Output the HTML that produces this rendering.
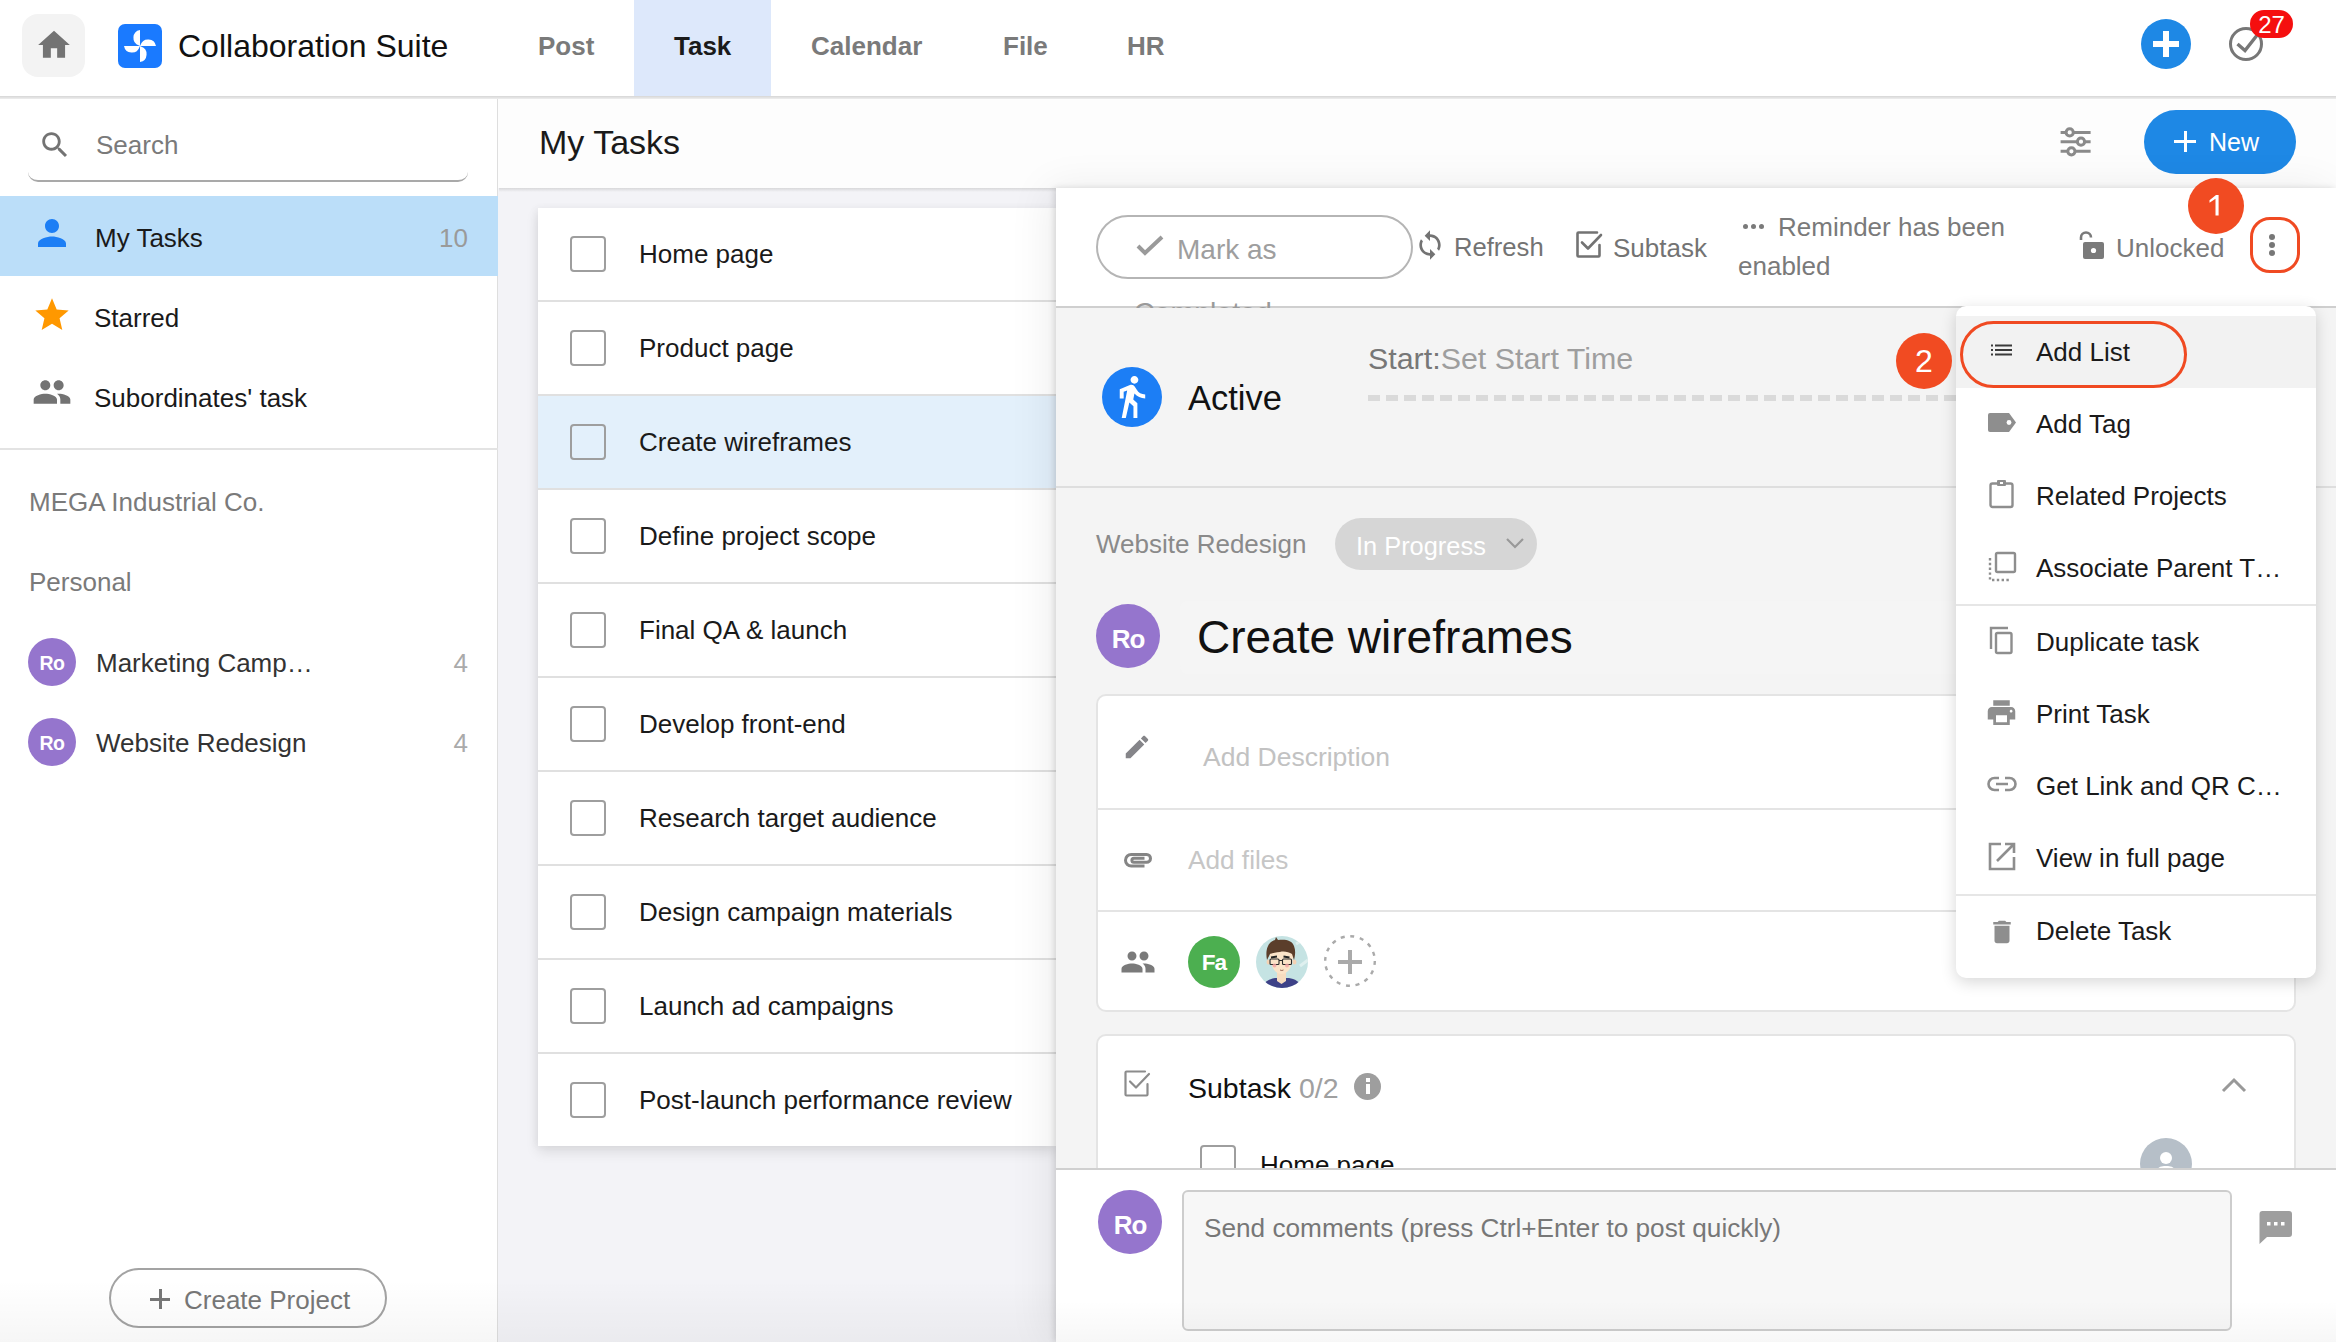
<!DOCTYPE html>
<html><head><meta charset="utf-8">
<style>
*{box-sizing:border-box;margin:0;padding:0}
html,body{width:2336px;height:1342px;overflow:hidden;background:#fff}
body{position:relative;font-family:"Liberation Sans",sans-serif;color:#1f1f1f}
.a{position:absolute}
.t{position:absolute;line-height:1;white-space:nowrap;font-size:26px}
svg{position:absolute;display:block}
</style></head><body>

<!-- ================= TOP BAR ================= -->
<div class="a" id="topbar" style="left:0;top:0;width:2336px;height:96px;background:#fff"></div>
<div class="a" style="left:0;top:96px;width:2336px;height:3px;background:linear-gradient(to bottom,#d6d6d6,#eeeeee)"></div>
<div class="a" style="left:22px;top:14px;width:63px;height:63px;border-radius:16px;background:#f3f3f3"></div>
<svg style="left:35px;top:26px" width="38" height="38" viewBox="0 0 24 24"><path fill="#737373" d="M10 20v-6h4v6h5v-8h3L12 3 2 12h3v8z"/></svg>
<div class="a" style="left:118px;top:24px;width:44px;height:44px;border-radius:7px;background:#1a7aff"></div>
<svg style="left:118px;top:24px" width="44" height="44" viewBox="0 0 44 44"><g fill="#fff"><path d="M22 22V6A8 8 0 0 0 21 21.5Z"/><path d="M22 22H38A8 8 0 0 0 22.5 21Z"/><path d="M22 22V38A8 8 0 0 0 23 22.5Z"/><path d="M22 22H6A8 8 0 0 0 21.5 23Z"/></g></svg>
<div class="t" style="left:178px;top:30px;font-size:32px;color:#111">Collaboration Suite</div>

<div class="a" style="left:634px;top:0;width:137px;height:96px;background:#dde8fb"></div>
<div class="t" style="left:538px;top:33px;font-weight:bold;color:#7a7a7a">Post</div>
<div class="t" style="left:674px;top:33px;font-weight:bold;color:#1a1a1a">Task</div>
<div class="t" style="left:811px;top:33px;font-weight:bold;color:#7a7a7a">Calendar</div>
<div class="t" style="left:1003px;top:33px;font-weight:bold;color:#7a7a7a">File</div>
<div class="t" style="left:1127px;top:33px;font-weight:bold;color:#7a7a7a">HR</div>

<div class="a" style="left:2141px;top:19px;width:50px;height:50px;border-radius:50%;background:#1e88e5"></div>
<div class="a" style="left:2153px;top:41px;width:26px;height:6px;background:#fff"></div>
<div class="a" style="left:2163px;top:31px;width:6px;height:26px;background:#fff"></div>
<svg style="left:2228px;top:26px" width="36" height="36" viewBox="0 0 36 36"><circle cx="18" cy="18" r="15.5" fill="none" stroke="#777" stroke-width="3"/><path d="M9.5 18l7.5 6.5L30 8" fill="none" stroke="#777" stroke-width="3.4"/></svg>
<div class="a" style="left:2250px;top:10px;width:43px;height:28px;border-radius:14px;background:#f50f0f"></div>
<div class="t" style="left:2250px;top:13px;width:43px;text-align:center;font-size:24px;color:#fff">27</div>

<!-- ================= SIDEBAR ================= -->
<div class="a" id="sidebar" style="left:0;top:99px;width:498px;height:1243px;background:#fff;border-right:1px solid #dedede"></div>
<svg style="left:38px;top:128px" width="34" height="34" viewBox="0 0 24 24"><path fill="#737373" d="M15.5 14h-.79l-.28-.27C15.41 12.59 16 11.11 16 9.5 16 5.91 13.09 3 9.5 3S3 5.91 3 9.5 5.91 16 9.5 16c1.61 0 3.09-.59 4.23-1.57l.27.28v.79l5 4.99L20.49 19l-4.99-5zm-6 0C7.01 14 5 11.99 5 9.5S7.01 5 9.5 5 14 7.01 14 9.5 11.99 14 9.5 14z"/></svg>
<div class="t" style="left:96px;top:132px;color:#7a7a7a">Search</div>
<div class="a" style="left:28px;top:160px;width:440px;height:22px;border-bottom:2px solid #a9a9a9;border-radius:0 0 10px 10px"></div>

<div class="a" style="left:0;top:196px;width:498px;height:80px;background:#bbdef9"></div>
<svg style="left:31px;top:212px" width="42" height="42" viewBox="0 0 24 24"><path fill="#1c7ef5" d="M12 12c2.21 0 4-1.79 4-4s-1.79-4-4-4-4 1.79-4 4 1.79 4 4 4zm0 2c-2.67 0-8 1.34-8 4v2h16v-2c0-2.66-5.33-4-8-4z"/></svg>
<div class="t" style="left:95px;top:225px;color:#1a1a1a">My Tasks</div>
<div class="t" style="left:400px;top:225px;width:68px;text-align:right;color:#9a9a9a">10</div>

<svg style="left:32px;top:295px" width="40" height="40" viewBox="0 0 24 24"><path fill="#ff9800" d="M12 17.27L18.18 21l-1.64-7.03L22 9.24l-7.19-.61L12 2 9.19 8.63 2 9.24l5.46 4.73L5.82 21z"/></svg>
<div class="t" style="left:94px;top:305px;color:#1a1a1a">Starred</div>
<svg style="left:32px;top:372px" width="40" height="40" viewBox="0 0 24 24"><path fill="#737373" d="M16 11c1.66 0 2.99-1.34 2.99-3S17.66 5 16 5c-1.66 0-3 1.34-3 3s1.34 3 3 3zm-8 0c1.66 0 2.99-1.34 2.99-3S9.66 5 8 5C6.34 5 5 6.34 5 8s1.34 3 3 3zm0 2c-2.33 0-7 1.17-7 3.5V19h14v-2.5c0-2.330-4.670-3.5-7-3.5zm8 0c-.29 0-.62.02-.97.05 1.16.84 1.97 1.970 1.97 3.45V19h6v-2.5c0-2.33-4.67-3.5-7-3.5z"/></svg>
<div class="t" style="left:94px;top:385px;color:#1a1a1a">Subordinates' task</div>
<div class="a" style="left:0;top:448px;width:498px;height:2px;background:#e3e3e3"></div>

<div class="t" style="left:29px;top:489px;color:#7a7a7a">MEGA Industrial Co.</div>
<div class="t" style="left:29px;top:569px;color:#7a7a7a">Personal</div>

<div class="a" style="left:28px;top:638px;width:48px;height:48px;border-radius:50%;background:#9575cd"></div>
<div class="t" style="left:28px;top:654px;width:48px;text-align:center;font-size:19.5px;font-weight:bold;letter-spacing:-0.6px;color:#fff">Ro</div>
<div class="t" style="left:96px;top:650px;color:#333">Marketing Camp…</div>
<div class="t" style="left:400px;top:650px;width:68px;text-align:right;color:#aaa">4</div>
<div class="a" style="left:28px;top:718px;width:48px;height:48px;border-radius:50%;background:#9575cd"></div>
<div class="t" style="left:28px;top:734px;width:48px;text-align:center;font-size:19.5px;font-weight:bold;letter-spacing:-0.6px;color:#fff">Ro</div>
<div class="t" style="left:96px;top:730px;color:#333">Website Redesign</div>
<div class="t" style="left:400px;top:730px;width:68px;text-align:right;color:#aaa">4</div>

<div class="a" style="left:109px;top:1268px;width:278px;height:60px;border-radius:30px;border:2px solid #a3a3a3"></div>
<div class="a" style="left:150px;top:1297.5px;width:20px;height:3px;background:#777"></div>
<div class="a" style="left:158.5px;top:1289px;width:3px;height:20px;background:#777"></div>
<div class="t" style="left:184px;top:1287px;color:#777">Create Project</div>

<!-- ================= MAIN HEADER ================= -->
<div class="a" id="header" style="left:498px;top:99px;width:1838px;height:89px;background:#fdfdfd"></div>
<div class="t" style="left:539px;top:125px;font-size:34px;color:#1a1a1a">My Tasks</div>
<svg style="left:2058px;top:126px" width="36" height="32" viewBox="0 0 36 32"><g fill="none" stroke="#8a8a8a" stroke-width="3"><path d="M2.600 6.400h5.500M15.300 6.400h17.300M2.600 15.700h16.800M26.600 15.700h6M2.600 25.300h7.200M17 25.300h15.600"/><circle cx="11.700" cy="6.400" r="3.600"/><circle cx="23" cy="15.700" r="3.600"/><circle cx="13.400" cy="25.300" r="3.600"/></g></svg>
<div class="a" style="left:2144px;top:110px;width:152px;height:64px;border-radius:32px;background:#1e88e5"></div>
<div class="a" style="left:2174px;top:140px;width:22px;height:3px;background:#fff"></div>
<div class="a" style="left:2183.5px;top:131px;width:3px;height:21px;background:#fff"></div>
<div class="t" style="left:2209px;top:130px;font-size:25px;color:#fff">New</div>

<!-- ================= LIST ================= -->
<div class="a" id="listbg" style="left:498px;top:188px;width:558px;height:1154px;background:#f3f3f7"></div>
<div class="a" style="left:499px;top:188px;width:557px;height:4px;background:linear-gradient(to bottom,#d8d8da,rgba(243,243,246,0))"></div>
<div class="a" id="list" style="left:538px;top:208px;width:518px;height:938px;background:#fff;box-shadow:0 6px 12px rgba(0,0,0,0.10),-3px 0 8px rgba(0,0,0,0.04)"></div>
<div class="a" style="left:538px;top:208px;width:518px;height:94px;background:#fff;border-bottom:2px solid #e0e0e0;"></div>
<div class="a" style="left:570px;top:236px;width:36px;height:36px;border:2px solid #9e9e9e;border-radius:4px"></div>
<div class="t" style="left:639px;top:241px;color:#1a1a1a">Home page</div>
<div class="a" style="left:538px;top:302px;width:518px;height:94px;background:#fff;border-bottom:2px solid #e0e0e0;"></div>
<div class="a" style="left:570px;top:330px;width:36px;height:36px;border:2px solid #9e9e9e;border-radius:4px"></div>
<div class="t" style="left:639px;top:335px;color:#1a1a1a">Product page</div>
<div class="a" style="left:538px;top:396px;width:518px;height:94px;background:#e3f0fb;border-bottom:2px solid #e0e0e0;"></div>
<div class="a" style="left:570px;top:424px;width:36px;height:36px;border:2px solid #9e9e9e;border-radius:4px"></div>
<div class="t" style="left:639px;top:429px;color:#1a1a1a">Create wireframes</div>
<div class="a" style="left:538px;top:490px;width:518px;height:94px;background:#fff;border-bottom:2px solid #e0e0e0;"></div>
<div class="a" style="left:570px;top:518px;width:36px;height:36px;border:2px solid #9e9e9e;border-radius:4px"></div>
<div class="t" style="left:639px;top:523px;color:#1a1a1a">Define project scope</div>
<div class="a" style="left:538px;top:584px;width:518px;height:94px;background:#fff;border-bottom:2px solid #e0e0e0;"></div>
<div class="a" style="left:570px;top:612px;width:36px;height:36px;border:2px solid #9e9e9e;border-radius:4px"></div>
<div class="t" style="left:639px;top:617px;color:#1a1a1a">Final QA &amp; launch</div>
<div class="a" style="left:538px;top:678px;width:518px;height:94px;background:#fff;border-bottom:2px solid #e0e0e0;"></div>
<div class="a" style="left:570px;top:706px;width:36px;height:36px;border:2px solid #9e9e9e;border-radius:4px"></div>
<div class="t" style="left:639px;top:711px;color:#1a1a1a">Develop front-end</div>
<div class="a" style="left:538px;top:772px;width:518px;height:94px;background:#fff;border-bottom:2px solid #e0e0e0;"></div>
<div class="a" style="left:570px;top:800px;width:36px;height:36px;border:2px solid #9e9e9e;border-radius:4px"></div>
<div class="t" style="left:639px;top:805px;color:#1a1a1a">Research target audience</div>
<div class="a" style="left:538px;top:866px;width:518px;height:94px;background:#fff;border-bottom:2px solid #e0e0e0;"></div>
<div class="a" style="left:570px;top:894px;width:36px;height:36px;border:2px solid #9e9e9e;border-radius:4px"></div>
<div class="t" style="left:639px;top:899px;color:#1a1a1a">Design campaign materials</div>
<div class="a" style="left:538px;top:960px;width:518px;height:94px;background:#fff;border-bottom:2px solid #e0e0e0;"></div>
<div class="a" style="left:570px;top:988px;width:36px;height:36px;border:2px solid #9e9e9e;border-radius:4px"></div>
<div class="t" style="left:639px;top:993px;color:#1a1a1a">Launch ad campaigns</div>
<div class="a" style="left:538px;top:1054px;width:518px;height:92px;background:#fff;"></div>
<div class="a" style="left:570px;top:1082px;width:36px;height:36px;border:2px solid #9e9e9e;border-radius:4px"></div>
<div class="t" style="left:639px;top:1087px;color:#1a1a1a">Post-launch performance review</div>


<div class="a" style="left:0;top:1280px;width:1056px;height:62px;background:linear-gradient(to bottom,rgba(0,0,0,0),rgba(0,0,0,0.035))"></div>
<!-- ================= DETAIL PANEL ================= -->
<div class="a" id="panel" style="left:1056px;top:188px;width:1280px;height:1154px;background:#f4f4f4;box-shadow:-2px 0 6px rgba(0,0,0,0.13),-8px 0 40px rgba(0,0,0,0.07)"></div>
<div class="a" style="left:1056px;top:188px;width:1280px;height:120px;background:#fff;border-bottom:2px solid #cfcfcf"></div>
<!-- Completed peeking text -->
<div class="a" style="left:1056px;top:296px;width:900px;height:11.5px;overflow:hidden"><div class="t" style="left:78px;top:1.5px;font-size:28.5px;color:#9a9a9a">Completed</div></div>
<div class="a" style="left:1096px;top:215px;width:317px;height:64px;border-radius:32px;border:2px solid #b5b5b5"></div>
<svg style="left:1136px;top:235px" width="28" height="22" viewBox="0 0 28 22"><path d="M2 11l7 7L26 2" fill="none" stroke="#9a9a9a" stroke-width="4"/></svg>
<div class="t" style="left:1177px;top:236px;font-size:28px;color:#9e9e9e">Mark as</div>
<svg style="left:1414px;top:228px" width="32" height="34" viewBox="0 0 24 24"><path fill="#737373" d="M12 4V1L8 5l4 4V6c3.310 0 6 2.690 6 6 0 1.010-.25 1.970-.7 2.800l1.460 1.460C19.540 15.030 20 13.570 20 12c0-4.420-3.580-8-8-8zm0 14c-3.310 0-6-2.690-6-6 0-1.010.25-1.970.7-2.800L5.240 7.740C4.460 8.970 4 10.430 4 12c0 4.420 3.580 8 8 8v3l4-4-4-4v3z"/></svg>
<div class="t" style="left:1454px;top:235px;font-size:25.6px;color:#737373">Refresh</div>
<svg style="left:1574px;top:229px" width="32" height="32" viewBox="0 0 32 32"><path d="M23 3.500H4.500a1 1 0 0 0-1 1V26.500a1 1 0 0 0 1 1h20a1 1 0 0 0 1-1V16" fill="none" stroke="#737373" stroke-width="2.600" stroke-linecap="round" stroke-linejoin="round"/><path d="M8 13.500l6 6L27 6" fill="none" stroke="#737373" stroke-width="2.600" stroke-linecap="round" stroke-linejoin="round"/></svg>
<div class="t" style="left:1613px;top:235px;color:#737373">Subtask</div>
<div class="a" style="left:1743px;top:224px;width:5px;height:5px;border-radius:50%;background:#7a7a7a"></div>
<div class="a" style="left:1751px;top:224px;width:5px;height:5px;border-radius:50%;background:#7a7a7a"></div>
<div class="a" style="left:1759px;top:224px;width:5px;height:5px;border-radius:50%;background:#7a7a7a"></div>
<div class="t" style="left:1778px;top:214px;color:#7a7a7a">Reminder has been</div>
<div class="t" style="left:1738px;top:253px;color:#7a7a7a">enabled</div>
<svg style="left:2076px;top:229px" width="30" height="32" viewBox="0 0 30 32"><path d="M5 11V8.5a5 5 0 0 1 10 0" fill="none" stroke="#7a7a7a" stroke-width="2.6"/><rect x="7" y="13" width="21" height="17" rx="2" fill="#7a7a7a"/><circle cx="17.5" cy="21.5" r="2.6" fill="#fff"/></svg>
<div class="t" style="left:2116px;top:235px;color:#7a7a7a">Unlocked</div>
<!-- kebab -->
<div class="a" style="left:2269px;top:234px;width:6px;height:6px;border-radius:50%;background:#777"></div>
<div class="a" style="left:2269px;top:242px;width:6px;height:6px;border-radius:50%;background:#777"></div>
<div class="a" style="left:2269px;top:250px;width:6px;height:6px;border-radius:50%;background:#777"></div>
<div class="a" style="left:2250px;top:217px;width:50px;height:56px;border-radius:20px;border:3px solid #f04a22"></div>
<div class="a" style="left:2188px;top:178px;width:56px;height:56px;border-radius:50%;background:#f14b22"></div>
<svg style="left:2188px;top:178px" width="56" height="56" viewBox="0 0 56 56"><path d="M30.600 17H28L21.500 22.200v2.600L27.500 20.800V37.400h3.100z" fill="#fff"/></svg>

<!-- Active section -->
<div class="a" style="left:1056px;top:486px;width:1280px;height:2px;background:#dedede"></div>
<div class="a" style="left:1102px;top:367px;width:60px;height:60px;border-radius:50%;background:#1c7ef5"></div>
<svg style="left:1108px;top:373px" width="47" height="47" viewBox="0 0 24 24"><path fill="#fff" d="M13.500 5.500c1.100 0 2-.9 2-2s-.9-2-2-2-2 .9-2 2 .9 2 2 2zM9.800 8.900L7 23h2.100l1.800-8 2.100 2v6h2v-7.500l-2.100-2 .6-3C14.800 12 16.800 13 19 13v-2c-1.900 0-3.500-1-4.300-2.400l-1-1.600c-.4-.6-1-1-1.700-1-.3 0-.5.1-.8.1L6 8.300V13h2V9.600l1.800-.7"/></svg>
<div class="t" style="left:1188px;top:381px;font-size:34.5px;color:#111">Active</div>
<div class="t" style="left:1368px;top:343px;font-size:30.4px;color:#777">Start:<span style="color:#9e9e9e">Set Start Time</span></div>
<div class="a" style="left:1368px;top:395px;width:600px;height:6px;background:repeating-linear-gradient(90deg,#dadada 0 12px,transparent 12px 18px)"></div>

<!-- project / status -->
<div class="t" style="left:1096px;top:531px;color:#8a8a8a">Website Redesign</div>
<div class="a" style="left:1335px;top:518px;width:202px;height:52px;border-radius:26px;background:#d6d6d6"></div>
<div class="t" style="left:1356px;top:534px;font-size:25.4px;color:#fff">In Progress</div>
<svg style="left:1505px;top:536px" width="20" height="14" viewBox="0 0 20 14"><path d="M2 3l8 8 8-8" fill="none" stroke="#999" stroke-width="2.2"/></svg>

<!-- title -->
<div class="a" style="left:1096px;top:604px;width:64px;height:64px;border-radius:50%;background:#9575cd"></div>
<div class="t" style="left:1096px;top:626px;width:64px;text-align:center;font-size:26px;font-weight:bold;letter-spacing:-1px;color:#fff">Ro</div>
<div class="a" style="left:1180px;top:601px;width:1116px;height:73px;border-radius:8px;background:#f5f5f5"></div>
<div class="t" style="left:1197px;top:614px;font-size:46px;color:#111">Create wireframes</div>

<!-- info card -->
<div class="a" style="left:1096px;top:694px;width:1200px;height:318px;border-radius:10px;background:#fff;border:2px solid #e4e4e4"></div>
<div class="a" style="left:1098px;top:808px;width:1196px;height:2px;background:#e4e4e4"></div>
<div class="a" style="left:1098px;top:910px;width:1196px;height:2px;background:#e4e4e4"></div>
<svg style="left:1122px;top:732px" width="30" height="30" viewBox="0 0 24 24"><path fill="#858589" d="M3 17.250V21h3.750L17.810 9.940l-3.750-3.750L3 17.250zM20.710 7.040c.39-.39.39-1.020 0-1.410l-2.340-2.340c-.39-.39-1.020-.39-1.410 0l-1.830 1.830 3.750 3.750 1.830-1.830z"/></svg>
<div class="t" style="left:1203px;top:744px;font-size:26.5px;color:#c2c2c2">Add Description</div>
<svg style="left:1122px;top:849px" width="32" height="22" viewBox="0 0 32 22"><path d="M22.5 17H9.25A5.75 5.75 0 0 1 9.25 5.5H24.6A3.9 3.9 0 0 1 24.6 13.3H11.9A2 2 0 0 1 11.9 9.3H22.5" fill="none" stroke="#858585" stroke-width="3"/></svg>
<div class="t" style="left:1188px;top:847px;font-size:26.2px;color:#c6c6c6">Add files</div>
<svg style="left:1120px;top:944px" width="36" height="36" viewBox="0 0 24 24"><path fill="#7a7a7a" d="M16 11c1.660 0 2.990-1.340 2.990-3S17.660 5 16 5c-1.660 0-3 1.340-3 3s1.340 3 3 3zm-8 0c1.660 0 2.990-1.340 2.990-3S9.660 5 8 5C6.340 5 5 6.340 5 8s1.340 3 3 3zm0 2c-2.330 0-7 1.170-7 3.500V19h14v-2.500c0-2.330-4.670-3.500-7-3.500zm8 0c-.29 0-.62.02-.97.05 1.160.84 1.970 1.970 1.970 3.450V19h6v-2.500c0-2.330-4.670-3.500-7-3.500z"/></svg>
<div class="a" style="left:1188px;top:936px;width:52px;height:52px;border-radius:50%;background:#4caf50"></div>
<div class="t" style="left:1188px;top:952px;width:52px;text-align:center;font-size:22.6px;font-weight:bold;letter-spacing:-1px;color:#fff">Fa</div>
<svg style="left:1256px;top:936px" width="52" height="52" viewBox="0 0 52 52"><defs><clipPath id="cav"><circle cx="26" cy="26" r="26"/></clipPath></defs><g clip-path="url(#cav)"><rect width="52" height="52" fill="#c5e3e3"/><path d="M40 8L50 2M44 30L52 24" stroke="#dff0ef" stroke-width="3"/><path d="M4 54c3-8 9-11 15-12h14c6 1 12 4 15 12z" fill="#3d4187"/><path d="M21 36h9v9l-4.500 3-4.500-3z" fill="#f7dcc0"/><path d="M13.500 14c0 16 5 24 12 24s12-8 12-24z" fill="#fbe3c8"/><ellipse cx="12.500" cy="26" rx="2" ry="2.500" fill="#f4d2b4"/><ellipse cx="38.500" cy="26" rx="2" ry="2.500" fill="#f4d2b4"/><path d="M11 24C9 14 12 6 19 4l1-3 2 3c7-1 14 0 16 6 2 5 1 10 0 14l-2-6c-3-2-8-3-12-2-4 0-7 1-10 2z" fill="#5b3e2b"/><path d="M15 21.500l6-1M27.500 20.500l6 1" stroke="#222" stroke-width="1.800"/><g fill="none" stroke="#2a2a2a" stroke-width="1.100"><rect x="14" y="23" width="9" height="5.500" rx="1"/><rect x="26.500" y="23" width="9" height="5.500" rx="1"/><path d="M23 24.500h3.500"/></g><circle cx="18.500" cy="29.500" r="2" fill="#f3a3a3" opacity=".8"/><circle cx="31" cy="29.500" r="2" fill="#f3a3a3" opacity=".8"/><path d="M24 34q2 1 3.500 0" fill="none" stroke="#9a6a5a" stroke-width="1"/></g></svg>
<svg style="left:1323px;top:934px" width="54" height="54" viewBox="0 0 54 54"><circle cx="27" cy="27" r="24.800" fill="none" stroke="#aaa" stroke-width="2.400" stroke-dasharray="4 5.700"/><path d="M15 28h24M27 16v24" stroke="#aaa" stroke-width="4"/></svg>

<!-- subtask card -->
<div class="a" style="left:1096px;top:1034px;width:1200px;height:200px;border-radius:10px;background:#fff;border:2px solid #e4e4e4"></div>
<svg style="left:1122px;top:1068px" width="32" height="32" viewBox="0 0 32 32"><path d="M23 3.500H4.500a1 1 0 0 0-1 1V26.500a1 1 0 0 0 1 1h20a1 1 0 0 0 1-1V16" fill="none" stroke="#8c8c8c" stroke-width="2.200" stroke-linecap="round" stroke-linejoin="round"/><path d="M8 13.500l6 6L27 6" fill="none" stroke="#8c8c8c" stroke-width="2.200" stroke-linecap="round" stroke-linejoin="round"/></svg>
<div class="t" style="left:1188px;top:1074px;font-size:28.5px;color:#111">Subtask <span style="color:#a0a0a0">0/2</span></div>
<div class="a" style="left:1354px;top:1073px;width:27px;height:27px;border-radius:50%;background:#9e9e9e"></div>
<div class="a" style="left:1366px;top:1084px;width:3.500px;height:10px;background:#fff"></div>
<div class="a" style="left:1366px;top:1078px;width:3.500px;height:3.500px;background:#fff"></div>
<svg style="left:2220px;top:1076px" width="28" height="20" viewBox="0 0 28 20"><path d="M3 15l11-11 11 11" fill="none" stroke="#999" stroke-width="3"/></svg>
<div class="a" style="left:1200px;top:1145px;width:36px;height:36px;border:2px solid #9e9e9e;border-radius:4px"></div>
<div class="t" style="left:1260px;top:1152px;color:#111">Home page</div>
<div class="a" style="left:2140px;top:1138px;width:52px;height:52px;border-radius:50%;background:#b6bfc8"></div>
<div class="a" style="left:2160px;top:1152px;width:12px;height:12px;border-radius:50%;background:#fff"></div><div class="a" style="left:2154px;top:1166px;width:24px;height:10px;border-radius:12px 12px 0 0;background:#fff"></div>

<!-- comment area -->
<div class="a" style="left:1056px;top:1168px;width:1280px;height:174px;background:#fff;border-top:2px solid #d0d0d0"></div>
<div class="a" style="left:1098px;top:1190px;width:64px;height:64px;border-radius:50%;background:#9575cd"></div>
<div class="t" style="left:1098px;top:1212px;width:64px;text-align:center;font-size:26px;font-weight:bold;letter-spacing:-1px;color:#fff">Ro</div>
<div class="a" style="left:1182px;top:1190px;width:1050px;height:141px;border-radius:6px;background:#f7f7f7;border:2px solid #cdcdcd"></div>
<div class="t" style="left:1204px;top:1215px;font-size:26.2px;color:#777">Send comments (press Ctrl+Enter to post quickly)</div>
<svg style="left:2258px;top:1210px" width="36" height="36" viewBox="0 0 36 36"><path d="M4 1h27a3 3 0 0 1 3 3v20a3 3 0 0 1-3 3H9L1.500 34V4a3 3 0 0 1 3-3z" fill="#9e9e9e"/><rect x="9" y="12" width="3.500" height="3.500" fill="#fff"/><rect x="16" y="12" width="3.500" height="3.500" fill="#fff"/><rect x="23" y="12" width="3.500" height="3.500" fill="#fff"/></svg>

<div class="a" style="left:1056px;top:1300px;width:1280px;height:42px;background:linear-gradient(to bottom,rgba(0,0,0,0),rgba(0,0,0,0.03))"></div>
<!-- ================= MENU ================= -->
<div class="a" id="menu" style="left:1956px;top:306px;width:360px;height:672px;border-radius:10px;background:#fff;box-shadow:0 4px 16px rgba(0,0,0,0.16)"></div>
<div class="a" style="left:1956px;top:316px;width:360px;height:72px;background:#f2f2f2"></div>
<div class="a" style="left:1956px;top:604px;width:360px;height:2px;background:#e6e6e6"></div>
<div class="a" style="left:1956px;top:894px;width:360px;height:2px;background:#e6e6e6"></div>
<svg style="left:1990px;top:343px" width="24" height="16" viewBox="0 0 24 16"><g fill="#3a3a3a"><rect x="1" y="1.500" width="2" height="2"/><rect x="1" y="6" width="2" height="2"/><rect x="1" y="10.500" width="2" height="2"/><rect x="5" y="1.500" width="17" height="2"/><rect x="5" y="6" width="17" height="2"/><rect x="5" y="10.500" width="17" height="2"/></g></svg>
<div class="t" style="left:2036px;top:339px;color:#1a1a1a">Add List</div>
<svg style="left:1986px;top:408px" width="32" height="28" viewBox="0 0 32 28"><path d="M4 5h19l7 9.500-7 9.500H4a2 2 0 0 1-2-2V7a2 2 0 0 1 2-2z" fill="#8e8e8e"/><circle cx="23" cy="14.500" r="2.400" fill="#fff"/></svg>
<div class="t" style="left:2036px;top:411px;color:#1a1a1a">Add Tag</div>
<svg style="left:1986px;top:478px" width="32" height="32" viewBox="0 0 32 32"><rect x="4.500" y="5.500" width="22" height="23.500" rx="2" fill="none" stroke="#8e8e8e" stroke-width="2.400"/><rect x="11" y="2" width="9" height="6" rx="1" fill="#8e8e8e"/><rect x="14" y="4" width="3" height="2" fill="#fff"/></svg>
<div class="t" style="left:2036px;top:483px;color:#1a1a1a">Related Projects</div>
<svg style="left:1986px;top:550px" width="32" height="32" viewBox="0 0 32 32"><rect x="10" y="3" width="19" height="19" rx="1.500" fill="none" stroke="#8e8e8e" stroke-width="2.400"/><path d="M4 8v22h20" fill="none" stroke="#8e8e8e" stroke-width="2.400" stroke-dasharray="2.400 2.400"/></svg>
<div class="t" style="left:2036px;top:555px;color:#1a1a1a">Associate Parent T…</div>
<svg style="left:1986px;top:624px" width="32" height="32" viewBox="0 0 32 32"><path d="M5 25V4h17" fill="none" stroke="#8e8e8e" stroke-width="2.400"/><rect x="10" y="9" width="15.500" height="20" rx="1.500" fill="none" stroke="#8e8e8e" stroke-width="2.400"/></svg>
<div class="t" style="left:2036px;top:629px;color:#1a1a1a">Duplicate task</div>
<svg style="left:1985px;top:696px" width="33" height="33" viewBox="0 0 24 24"><path fill="#8e8e8e" d="M19 8H5c-1.660 0-3 1.340-3 3v6h4v4h12v-4h4v-6c0-1.660-1.340-3-3-3zm-3 11H8v-5h8v5zm3-7c-.55 0-1-.45-1-1s.45-1 1-1 1 .45 1 1-.45 1-1 1zm-1-9H6v4h12V3z"/></svg>
<div class="t" style="left:2036px;top:701px;color:#1a1a1a">Print Task</div>
<svg style="left:1986px;top:770px" width="32" height="28" viewBox="0 0 32 28"><path d="M13 8H8.500a6 6 0 0 0 0 12H13M19 8h4.500a6 6 0 0 1 0 12H19M10 14h12" fill="none" stroke="#8e8e8e" stroke-width="2.600"/></svg>
<div class="t" style="left:2036px;top:773px;color:#1a1a1a">Get Link and QR C…</div>
<svg style="left:1986px;top:840px" width="32" height="32" viewBox="0 0 32 32"><path d="M15 4H4v25h24V17" fill="none" stroke="#8e8e8e" stroke-width="2.600"/><path d="M11 21L28 4M19 4h9v9" fill="none" stroke="#8e8e8e" stroke-width="2.600"/></svg>
<div class="t" style="left:2036px;top:845px;color:#1a1a1a">View in full page</div>
<svg style="left:1987px;top:917px" width="30" height="30" viewBox="0 0 24 24"><path fill="#8e8e8e" d="M6 19c0 1.100.9 2 2 2h8c1.100 0 2-.9 2-2V7H6v12zM19 4h-3.500l-1-1h-5l-1 1H5v2h14V4z"/></svg>
<div class="t" style="left:2036px;top:918px;color:#1a1a1a">Delete Task</div>
<div class="a" style="left:1960px;top:321px;width:227px;height:67px;border-radius:34px;border:3px solid #f04a22"></div>
<div class="a" style="left:1896px;top:333px;width:56px;height:56px;border-radius:50%;background:#f14b22"></div>
<div class="t" style="left:1896px;top:345px;width:56px;text-align:center;font-size:32px;color:#fff">2</div>

</body></html>
